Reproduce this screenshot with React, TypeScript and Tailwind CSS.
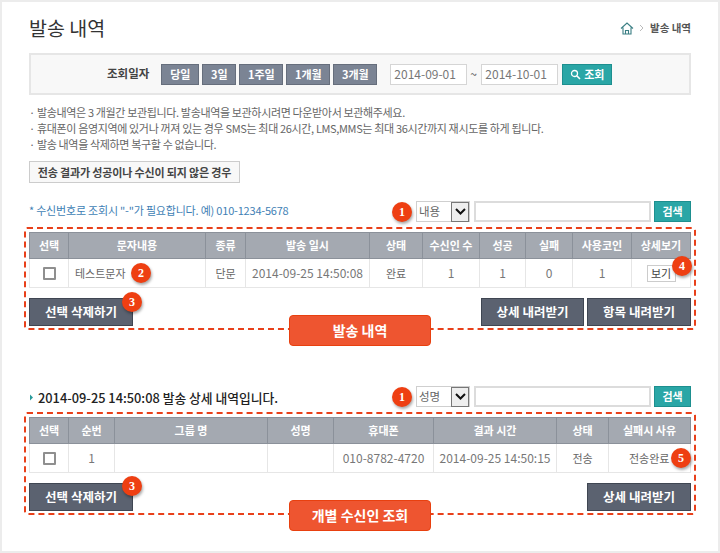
import React from "react";

const Badge = ({ n, className }: { n: number; className: string }) => (
  <span
    className={`absolute z-10 flex h-[20px] w-[20px] items-center justify-center rounded-full bg-[#ee3f12] text-[12px] font-bold text-white shadow-[1px_2px_3px_rgba(0,0,0,0.35)] font-['Liberation_Serif',serif] ${className}`}
  >
    {n}
  </span>
);

const DarkBtn = ({ children, className = "" }: { children: React.ReactNode; className?: string }) => (
  <button className={`flex h-[28px] items-center justify-center border border-[#3f4652] bg-[#5b6270] text-[12.5px] font-bold text-white ${className}`}>
    {children}
  </button>
);

const Checkbox = () => <span className="block h-[13px] w-[13px] rounded-[1px] border-2 border-[#8f8f8f] bg-white" />;

const Num = ({ children }: { children: React.ReactNode }) => <span className="text-[12px] text-[#777]">{children}</span>;

const Search = ({ label }: { label: string }) => (
  <div className="flex items-center">
    <div className="flex h-[21px] w-[54px] items-center border border-[#cfcfcf] bg-white pl-[2px] text-[11.5px] text-[#666]">
      <span className="flex-1">{label}</span>
      <span className="flex h-[20px] w-[18px] items-center justify-center border border-[#777] bg-[#eee]">
        <svg width="11" height="7" viewBox="0 0 11 7"><path d="M1 1l4.5 4.5L10 1" fill="none" stroke="#111" strokeWidth="2" /></svg>
      </span>
    </div>
    <div className="ml-[4px] h-[21px] w-[177px] border-2 border-[#dcdcdc] bg-white" />
    <button className="ml-[3px] flex h-[21px] w-[37px] items-center justify-center border border-[#1d8f8f] bg-[#2aa6a6] text-[11px] font-bold text-white">검색</button>
  </div>
);

const Table = ({ cols, heads, cells }: { cols: string; heads: string[]; cells: React.ReactNode[] }) => (
  <div className={`grid ${cols} text-center`}>
    {heads.map((h, i) => (
      <div key={i} className={`flex h-[27px] items-center justify-center border-y border-l border-[#8b919a] bg-[#a4a9b1] text-[11px] font-bold text-white ${i === heads.length - 1 ? "border-r" : ""}`}>
        {h}
      </div>
    ))}
    {cells.map((c, i) => (
      <div key={i} className={`flex h-[29px] items-center justify-center border-b border-l border-[#e6e6e6] text-[11px] text-[#666] ${i === cells.length - 1 ? "border-r" : ""}`}>
        {c}
      </div>
    ))}
  </div>
);

const Tag = ({ children }: { children: React.ReactNode }) => (
  <div className="absolute left-[263px] top-[86px] z-10 flex h-[31px] w-[142px] items-center justify-center rounded-[4px] border border-[#e8400f] bg-[#ee5530] text-[14px] font-bold text-white">
    {children}
  </div>
);

const dateBtn = "flex h-[21px] items-center justify-center border border-[#666e7c] bg-[#7b8494] text-[11px] font-bold text-white";

export default function App() {
  return (
    <div className="relative h-[553px] w-[720px] overflow-hidden border-2 border-[#ececec] bg-white pl-[27px] pr-[27px] font-['Noto_Sans_CJK_KR','Noto_Sans',sans-serif] text-[#555]">
      <div className="flex h-[51px] items-center justify-between pt-[1px]">
        <h1 className="text-[19.5px] leading-none text-[#333]">발송 내역</h1>
        <div className="flex items-center text-[10.5px] font-bold text-[#555]">
          <svg width="14" height="13" viewBox="0 0 14 13" className="mr-[5px]">
            <path d="M1 6.5L7 1l6 5.5M3 5.5V12h8V5.5M5.5 12V8.5h3V12" fill="none" stroke="#3b7f84" strokeWidth="1.1" />
          </svg>
          <svg width="5" height="8" viewBox="0 0 5 8" className="mr-[6px]"><path d="M1 1l3 3-3 3" fill="none" stroke="#bbb" /></svg>
          발송 내역
        </div>
      </div>

      <div className="flex h-[42px] items-center border-2 border-[#e6e6e6] bg-[#f8f8f8] pl-[76px]">
        <span className="mr-[12px] text-[11.5px] font-bold text-[#444]">조회일자</span>
        <div className="flex gap-[3px]">
          <button className={`${dateBtn} w-[38px]`}>당일</button>
          <button className={`${dateBtn} w-[34px]`}>3일</button>
          <button className={`${dateBtn} w-[44px]`}>1주일</button>
          <button className={`${dateBtn} w-[44px]`}>1개월</button>
          <button className={`${dateBtn} w-[44px]`}>3개월</button>
        </div>
        <div className="ml-[13px] flex h-[21px] w-[77px] items-center border border-[#d5d5d5] bg-white pl-[3px] text-[12px] text-[#777]">2014-09-01</div>
        <span className="mx-[3px] w-[8px] text-[12px]">~</span>
        <div className="flex h-[21px] w-[77px] items-center border border-[#d5d5d5] bg-white pl-[3px] text-[12px] text-[#777]">2014-10-01</div>
        <button className="ml-[4px] flex h-[21px] w-[50px] items-center justify-center border border-[#1d8f8f] bg-[#2aa6a6] text-[11px] font-bold text-white">
          <svg width="11" height="11" viewBox="0 0 11 11" className="mr-[3px]"><circle cx="4.5" cy="4.5" r="3" fill="none" stroke="#fff" strokeWidth="1.3" /><path d="M7 7l3 3" stroke="#fff" strokeWidth="1.6" /></svg>
          조회
        </button>
      </div>

      <ul className="mt-[9px] text-[11px] leading-[16px] tracking-[-0.35px] text-[#666]">
        <li>· 발송내역은 3 개월간 보관됩니다. 발송내역을 보관하시려면 다운받아서 보관해주세요.</li>
        <li>· 휴대폰이 음영지역에 있거나 꺼져 있는 경우 SMS는 최대 26시간, LMS,MMS는 최대 36시간까지 재시도를 하게 됩니다.</li>
        <li>· 발송 내역을 삭제하면 복구할 수 없습니다.</li>
      </ul>

      <button className="mt-[9px] flex h-[22px] w-[211px] items-center justify-center whitespace-nowrap border border-[#ccc] bg-[#f8f8f8] text-[11px] font-bold tracking-[-0.15px] text-[#444]">
        전송 결과가 성공이나 수신이 되지 않은 경우
      </button>

      <div className="relative mt-[18px] flex h-[21px] items-center justify-end">
        <span className="absolute left-0 top-[1px] text-[11px] tracking-[-0.2px] text-[#3f7fb5]">* 수신번호로 조회시 "-"가 필요합니다. 예) 010-1234-5678</span>
        <Search label="내용" />
        <Badge n={1} className="left-[363px] top-[1px]" />
      </div>

      <div className="relative -mx-[5px] mt-[5px] h-[103px] rounded-[3px] border-2 border-dashed border-[#e8401a] px-[3px] pt-[3px]">
        <Table
          cols="grid-cols-[39px_137px_40px_124px_53px_57px_46px_47px_59px_60px]"
          heads={["선택", "문자내용", "종류", "발송 일시", "상태", "수신인 수", "성공", "실패", "사용코인", "상세보기"]}
          cells={[
            <Checkbox />,
            <span className="w-full pl-[6px] text-left">테스트문자</span>,
            "단문",
            <Num>2014-09-25 14:50:08</Num>,
            "완료",
            <Num>1</Num>,
            <Num>1</Num>,
            <Num>0</Num>,
            <Num>1</Num>,
            <span className="flex h-[17px] w-[29px] items-center justify-center border border-[#ccc] text-[11px] text-[#444]">보기</span>,
          ]}
        />
        <div className="mt-[10px] flex items-start justify-between">
          <DarkBtn className="w-[104px]">선택 삭제하기</DarkBtn>
          <div className="flex gap-[3px]">
            <DarkBtn className="w-[103px]">상세 내려받기</DarkBtn>
            <DarkBtn className="w-[104px]">항목 내려받기</DarkBtn>
          </div>
        </div>
        <Badge n={2} className="left-[105px] top-[34px]" />
        <Badge n={3} className="left-[96px] top-[63px]" />
        <Badge n={4} className="left-[646px] top-[27px]" />
        <Tag>발송 내역</Tag>
      </div>

      <div className="relative mt-[56px] flex h-[21px] items-center justify-end">
        <span className="absolute left-0 top-[2px] flex items-center text-[12.8px] font-medium text-[#222]">
          <svg width="5" height="7" viewBox="0 0 5 7" className="mr-[4px]"><path d="M1 0.5l3 3-3 3z" fill="#2a9a9a" /></svg>
          2014-09-25 14:50:08 발송 상세 내역입니다.
        </span>
        <Search label="성명" />
        <Badge n={1} className="left-[363px] top-[1px]" />
      </div>

      <div className="relative -mx-[5px] mt-[5px] h-[103px] rounded-[3px] border-2 border-dashed border-[#e8401a] px-[3px] pt-[3px]">
        <Table
          cols="grid-cols-[39px_46px_153px_66px_100px_123px_52px_83px]"
          heads={["선택", "순번", "그룹 명", "성명", "휴대폰", "결과 시간", "상태", "실패시 사유"]}
          cells={[
            <Checkbox />,
            <Num>1</Num>,
            "",
            "",
            <Num>010-8782-4720</Num>,
            <Num>2014-09-25 14:50:15</Num>,
            "전송",
            <span className="w-full pl-[20px] text-left">전송완료</span>,
          ]}
        />
        <div className="mt-[10px] flex items-start justify-between">
          <DarkBtn className="w-[104px]">선택 삭제하기</DarkBtn>
          <DarkBtn className="w-[104px]">상세 내려받기</DarkBtn>
        </div>
        <Badge n={3} className="left-[96px] top-[62px]" />
        <Badge n={5} className="left-[645px] top-[34px]" />
        <Tag>개별 수신인 조회</Tag>
      </div>
    </div>
  );
}
